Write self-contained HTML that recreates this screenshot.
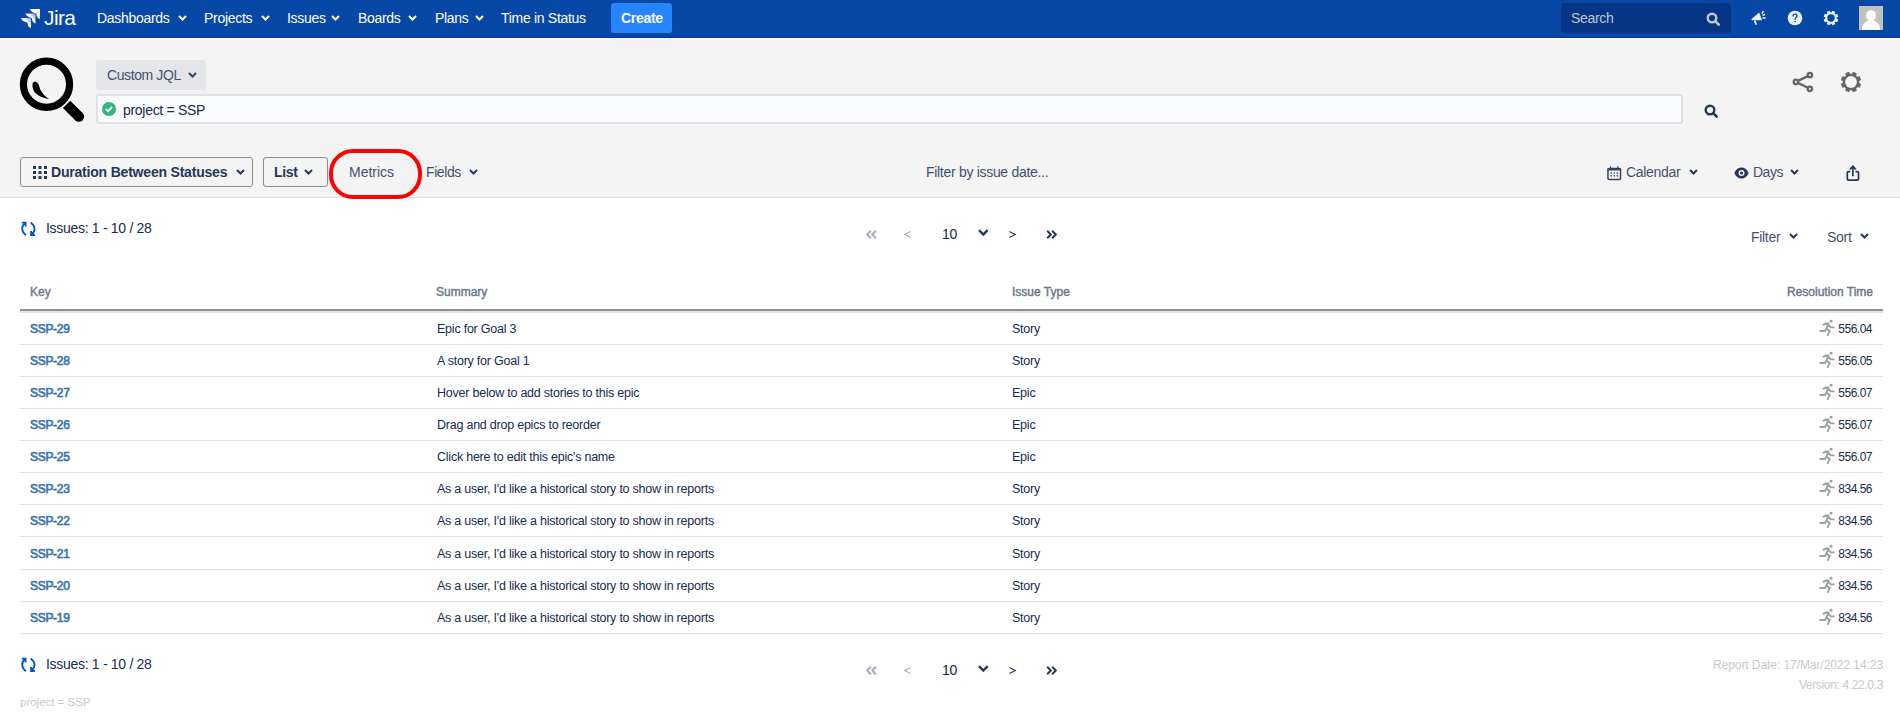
<!DOCTYPE html>
<html><head><meta charset="utf-8">
<style>
*{box-sizing:border-box;margin:0;padding:0}
html,body{width:1900px;height:724px;overflow:hidden;background:#fff;font-family:"Liberation Sans",sans-serif;color:#172b4d}
.a{position:absolute;white-space:nowrap;line-height:1}
svg{position:absolute;overflow:visible}
#hdr{position:absolute;left:0;top:0;width:1900px;height:38px;background:#0747a6;border-bottom:1px solid #0038a0}
#hl{position:absolute;left:0;top:38px;width:1900px;height:1px;background:#fff}
#top{position:absolute;left:0;top:39px;width:1900px;height:158px;background:#f4f4f4}
#tbl{position:absolute;left:0;top:197px;width:1900px;height:1px;background:#dfe1e6}
.nav{font-size:14px;letter-spacing:-0.3px;color:#fff}
.tb{font-size:14px;letter-spacing:-0.3px;color:#42526e}
.hline{position:absolute;left:20px;width:1863px;height:1px;background:#dfe1e6}
.th{font-size:12px;color:#6b778c;-webkit-text-stroke:0.4px #6b778c}
.key{font-size:12px;letter-spacing:-0.3px;color:#3572b0;-webkit-text-stroke:0.6px #3572b0}
.td{font-size:12.5px;letter-spacing:-0.23px;color:#172b4d}
.num{font-size:12px;letter-spacing:-0.5px;color:#172b4d}
</style></head><body>
<div id="hdr"></div><div id="hl"></div>
<div id="top"></div><div id="tbl"></div>

<!-- header -->
<svg style="left:20px;top:8px" width="22" height="22" viewBox="0 0 22 22">
 <defs><linearGradient id="jg" x1="0.2" y1="0.8" x2="1" y2="0.1"><stop offset="0" stop-color="#fff"/><stop offset="0.5" stop-color="#fff"/><stop offset="1" stop-color="#7f9ed9"/></linearGradient></defs>
 <path transform="translate(10 1)" d="M0 0 H9.9 V9.9 C8.6 9.5 7.2 8.8 6.8 7.2 C6.5 5.8 6.6 4.6 5.6 4.2 C4.5 3.8 2.8 3.6 1.8 2.7 C0.9 1.9 0.3 1 0 0 Z" fill="#fff"/>
 <path transform="translate(5.6 5.5)" d="M0 0 H9.9 V9.9 C8.6 9.5 7.2 8.8 6.8 7.2 C6.5 5.8 6.6 4.6 5.6 4.2 C4.5 3.8 2.8 3.6 1.8 2.7 C0.9 1.9 0.3 1 0 0 Z" fill="url(#jg)"/>
 <path transform="translate(1.1 10)" d="M0 0 H9.9 V9.9 C8.6 9.5 7.2 8.8 6.8 7.2 C6.5 5.8 6.6 4.6 5.6 4.2 C4.5 3.8 2.8 3.6 1.8 2.7 C0.9 1.9 0.3 1 0 0 Z" fill="url(#jg)"/>
</svg>
<div class="a nav" style="left:44px;top:7px;font-size:21px;letter-spacing:-0.6px">Jira</div>

<div class="a nav" style="left:97px;top:11px">Dashboards</div>
<div class="a nav" style="left:204px;top:11px">Projects</div>
<div class="a nav" style="left:287px;top:11px">Issues</div>
<div class="a nav" style="left:358px;top:11px">Boards</div>
<div class="a nav" style="left:435px;top:11px">Plans</div>
<div class="a nav" style="left:501px;top:11px">Time in Status</div>
<svg style="left:178px;top:15px" width="9" height="6"><path d="M1 1 L4.5 4.5 L8 1" stroke="#fff" stroke-width="2" fill="none"/></svg>
<svg style="left:261px;top:15px" width="9" height="6"><path d="M1 1 L4.5 4.5 L8 1" stroke="#fff" stroke-width="2" fill="none"/></svg>
<svg style="left:331px;top:15px" width="9" height="6"><path d="M1 1 L4.5 4.5 L8 1" stroke="#fff" stroke-width="2" fill="none"/></svg>
<svg style="left:408px;top:15px" width="9" height="6"><path d="M1 1 L4.5 4.5 L8 1" stroke="#fff" stroke-width="2" fill="none"/></svg>
<svg style="left:475px;top:15px" width="9" height="6"><path d="M1 1 L4.5 4.5 L8 1" stroke="#fff" stroke-width="2" fill="none"/></svg>

<div style="position:absolute;left:611px;top:3px;width:61px;height:30px;background:#2684ff;border-radius:3px"></div>
<div class="a nav" style="left:621px;top:11px;font-weight:bold">Create</div>

<div style="position:absolute;left:1561px;top:3px;width:170px;height:30px;background:#053584;border-radius:3px"></div>
<div class="a nav" style="left:1571px;top:11px;color:#c1c7d0">Search</div>
<svg style="left:1706px;top:12px" width="15" height="14" viewBox="0 0 15 14"><circle cx="6" cy="6" r="4.3" stroke="#c1c7d0" stroke-width="2.4" fill="none"/><path d="M9.3 9.3 L12.8 12.6" stroke="#c1c7d0" stroke-width="2.6" stroke-linecap="round"/></svg>

<!-- megaphone -->
<svg style="left:1751px;top:11px" width="16" height="15" viewBox="0 0 16 15">
 <path d="M0.9 7.9 L8 1.9 L10.7 8.9 L0.9 8.9 Z" fill="#e9f2ff" stroke="#e9f2ff" stroke-width="0.6" stroke-linejoin="round"/>
 <path d="M3.6 9.6 L5.3 13.6" stroke="#e9f2ff" stroke-width="1.7"/>
 <path d="M10.8 2.5 L12.5 0.3 M11.4 4.2 L14.1 3.6 M11.6 6.7 L14.7 7.2" stroke="#e9f2ff" stroke-width="1.5"/>
</svg>
<!-- help -->
<svg style="left:1787px;top:10px" width="16" height="16" viewBox="0 0 16 16">
 <circle cx="8" cy="8" r="7.3" fill="#e9f2ff"/>
 <path d="M6 6.1 C6 4.8 6.9 4.1 8 4.1 C9.2 4.1 10 4.9 10 5.9 C10 7.3 8.1 7.4 8.1 9.3" stroke="#0747a6" stroke-width="1.3" fill="none" stroke-linecap="round"/>
 <circle cx="8.1" cy="11.5" r="0.8" fill="#0747a6"/>
</svg>
<!-- gear -->
<svg style="left:1823px;top:10px" width="16" height="16" viewBox="0 0 16 16">
 <g fill="#e9f2ff" transform="rotate(22.5 8 8)">
  <circle cx="8" cy="8" r="5.7"/>
  <path d="M6.5 0.7 H9.5 L9.8 3 H6.2 Z"/>
  <path d="M6.5 0.7 H9.5 L9.8 3 H6.2 Z" transform="rotate(45 8 8)"/>
  <path d="M6.5 0.7 H9.5 L9.8 3 H6.2 Z" transform="rotate(90 8 8)"/>
  <path d="M6.5 0.7 H9.5 L9.8 3 H6.2 Z" transform="rotate(135 8 8)"/>
  <path d="M6.5 0.7 H9.5 L9.8 3 H6.2 Z" transform="rotate(180 8 8)"/>
  <path d="M6.5 0.7 H9.5 L9.8 3 H6.2 Z" transform="rotate(225 8 8)"/>
  <path d="M6.5 0.7 H9.5 L9.8 3 H6.2 Z" transform="rotate(270 8 8)"/>
  <path d="M6.5 0.7 H9.5 L9.8 3 H6.2 Z" transform="rotate(315 8 8)"/>
 </g>
 <circle cx="8" cy="8" r="3.7" fill="#0747a6"/>
</svg>
<!-- avatar -->
<div style="position:absolute;left:1859px;top:6px;width:24px;height:24px;background:#c1c1c1;overflow:hidden">
 <div style="position:absolute;left:7px;top:4px;width:10px;height:11px;border-radius:50%;background:#fff"></div>
 <div style="position:absolute;left:3px;top:14px;width:18px;height:18px;border-radius:9px 9px 0 0;background:#fff"></div>
</div>

<!-- JQL area -->
<svg style="left:19px;top:57px" width="66" height="66" viewBox="0 0 66 66">
 <circle cx="27.5" cy="27.3" r="23.1" stroke="#000" stroke-width="7.2" fill="none"/>
 <path d="M47.6 47.4 L59.9 59.6" stroke="#000" stroke-width="10.4"/>
 <circle cx="59.9" cy="59.6" r="5.2" fill="#000"/>
 <path d="M30.3 42.2 C25 41.5 19.5 39 15.8 35.5 C13.5 32.5 13.2 28.5 13.6 26.5 C14 24.4 17.5 24 19.1 26.5 C20 28 20.5 31 21.5 33 C23.5 37 27 40 30.3 42.2 Z" fill="#000"/>
</svg>

<div style="position:absolute;left:96px;top:60px;width:110px;height:30px;background:#e4e5e9;border-radius:3px"></div>
<div class="a tb" style="left:107px;top:68px;letter-spacing:-0.4px">Custom JQL</div>
<svg style="left:188px;top:72px" width="9" height="6"><path d="M1 1 L4.5 4.5 L8 1" stroke="#344563" stroke-width="2" fill="none"/></svg>

<div style="position:absolute;left:96px;top:94px;width:1587px;height:30px;background:#fafbfc;border:2px solid #dfe1e6;border-radius:3px"></div>
<svg style="left:102px;top:102px" width="14" height="14" viewBox="0 0 14 14"><circle cx="7" cy="7" r="7" fill="#36b37e"/><path d="M3.8 7.2 L6 9.2 L10.2 4.9" stroke="#fff" stroke-width="1.8" fill="none"/></svg>
<div class="a tb" style="left:123px;top:103px;color:#172b4d">project = SSP</div>
<svg style="left:1704px;top:104px" width="15" height="14" viewBox="0 0 15 14"><circle cx="6" cy="6" r="4.3" stroke="#253858" stroke-width="2.4" fill="none"/><path d="M9.3 9.3 L12.6 12.5" stroke="#253858" stroke-width="2.6" stroke-linecap="round"/></svg>

<!-- share -->
<svg style="left:1792px;top:71px" width="22" height="22" viewBox="0 0 22 22">
 <g stroke="#666" stroke-width="2.3" fill="none"><circle cx="3.9" cy="10.9" r="2.2"/><circle cx="17.9" cy="4.1" r="2.2"/><circle cx="17.9" cy="17.8" r="2.2"/><path d="M5.9 9.9 L15.9 5.1 M5.9 11.9 L15.9 16.8"/></g>
</svg>
<!-- gear grey -->
<svg style="left:1840px;top:71px" width="22" height="22" viewBox="0 0 22 22">
 <g fill="#666" transform="rotate(22.5 11 11)">
  <circle cx="11" cy="11" r="8.2"/>
  <path d="M9 0.8 H13 L13.4 4 H8.6 Z"/>
  <path d="M9 0.8 H13 L13.4 4 H8.6 Z" transform="rotate(45 11 11)"/>
  <path d="M9 0.8 H13 L13.4 4 H8.6 Z" transform="rotate(90 11 11)"/>
  <path d="M9 0.8 H13 L13.4 4 H8.6 Z" transform="rotate(135 11 11)"/>
  <path d="M9 0.8 H13 L13.4 4 H8.6 Z" transform="rotate(180 11 11)"/>
  <path d="M9 0.8 H13 L13.4 4 H8.6 Z" transform="rotate(225 11 11)"/>
  <path d="M9 0.8 H13 L13.4 4 H8.6 Z" transform="rotate(270 11 11)"/>
  <path d="M9 0.8 H13 L13.4 4 H8.6 Z" transform="rotate(315 11 11)"/>
 </g>
 <circle cx="11" cy="11" r="5.9" fill="#f4f4f4"/>
</svg>

<!-- toolbar -->
<div style="position:absolute;left:20px;top:157px;width:233px;height:30px;border:1px solid #8c8c8c;border-radius:3px"></div>
<svg style="left:33px;top:166px" width="14" height="14" viewBox="0 0 14 14"><g fill="#253858">
 <rect x="0" y="0" width="3" height="3"/><rect x="5.5" y="0" width="3" height="3"/><rect x="11" y="0" width="3" height="3"/>
 <rect x="0" y="5" width="3" height="3"/><rect x="5.5" y="5" width="3" height="3"/><rect x="11" y="5" width="3" height="3"/>
 <rect x="0" y="10" width="3" height="3"/><rect x="5.5" y="10" width="3" height="3"/><rect x="11" y="10" width="3" height="3"/></g></svg>
<div class="a tb" style="left:51px;top:165px;font-weight:bold;color:#253858;letter-spacing:-0.2px">Duration Between Statuses</div>
<svg style="left:236px;top:169px" width="9" height="6"><path d="M1 1 L4.5 4.5 L8 1" stroke="#253858" stroke-width="2" fill="none"/></svg>

<div style="position:absolute;left:263px;top:157px;width:65px;height:30px;border:1px solid #8c8c8c;border-radius:3px"></div>
<div class="a tb" style="left:274px;top:165px;font-weight:bold;color:#253858">List</div>
<svg style="left:304px;top:169px" width="9" height="6"><path d="M1 1 L4.5 4.5 L8 1" stroke="#253858" stroke-width="2" fill="none"/></svg>

<div class="a tb" style="left:349px;top:165px;letter-spacing:0">Metrics</div>
<div class="a tb" style="left:426px;top:165px;letter-spacing:-0.4px">Fields</div>
<svg style="left:469px;top:169px" width="9" height="6"><path d="M1 1 L4.5 4.5 L8 1" stroke="#253858" stroke-width="2" fill="none"/></svg>

<div class="a tb" style="left:926px;top:165px">Filter by issue date...</div>

<svg style="left:1607px;top:166px" width="15" height="15" viewBox="0 0 15 15">
 <rect x="0.95" y="2.45" width="12.6" height="11" rx="1.2" stroke="#344563" stroke-width="1.5" fill="none"/>
 <rect x="0.5" y="2" width="13.5" height="2.6" rx="1" fill="#344563"/>
 <path d="M3.6 0.2 V2.4 M10.8 0.2 V2.4" stroke="#344563" stroke-width="1.2"/>
 <g fill="#344563"><rect x="3.5" y="6.3" width="1.4" height="1.4"/><rect x="6.6" y="6.3" width="1.4" height="1.4"/><rect x="9.7" y="6.3" width="1.4" height="1.4"/><rect x="3.5" y="9.1" width="1.4" height="1.4"/><rect x="6.6" y="9.1" width="1.4" height="1.4"/><rect x="9.7" y="9.1" width="1.4" height="1.4"/></g>
</svg>
<div class="a tb" style="left:1626px;top:165px">Calendar</div>
<svg style="left:1689px;top:169px" width="9" height="6"><path d="M1 1 L4.5 4.5 L8 1" stroke="#253858" stroke-width="2" fill="none"/></svg>

<svg style="left:1734px;top:167px" width="15" height="12" viewBox="0 0 15 12">
 <path d="M0.3 6 C2 2 4.8 0.4 7.5 0.4 C10.2 0.4 13 2 14.7 6 C13 10 10.2 11.6 7.5 11.6 C4.8 11.6 2 10 0.3 6 Z" fill="#253858"/>
 <circle cx="7.5" cy="6" r="3" fill="#f4f4f4"/><circle cx="7.5" cy="6" r="1.6" fill="#253858"/>
</svg>
<div class="a tb" style="left:1753px;top:165px;letter-spacing:-0.5px">Days</div>
<svg style="left:1790px;top:169px" width="9" height="6"><path d="M1 1 L4.5 4.5 L8 1" stroke="#253858" stroke-width="2" fill="none"/></svg>

<svg style="left:1846px;top:165px" width="14" height="16" viewBox="0 0 14 16">
 <path d="M4.3 6.6 H2.6 C1.8 6.6 1.3 7.1 1.3 7.9 V13.9 C1.3 14.6 1.8 15.1 2.6 15.1 H11.2 C12 15.1 12.5 14.6 12.5 13.9 V7.9 C12.5 7.1 12 6.6 11.2 6.6 H9.5" stroke="#253858" stroke-width="1.7" fill="none"/>
 <path d="M6.9 11.2 V1.6 M3.9 4.5 L6.9 1.3 L9.9 4.5" stroke="#253858" stroke-width="1.7" fill="none"/>
</svg>

<!-- red highlight -->
<div style="position:absolute;left:329px;top:149px;width:93px;height:50px;border:4px solid #ff0000;border-radius:24px"></div>

<!-- list header -->
<svg style="left:15px;top:215px" width="30" height="30" viewBox="0 0 30 30"><g stroke="#0052cc" stroke-width="1.8" fill="none">
 <path d="M9.8 8.6 C7.8 10 7 12 7.2 14 C7.4 16.5 9 18.8 11 20.2"/><path d="M6.8 7.7 H10.6 V11.6"/>
 <path d="M16.9 19.1 C18.9 17.7 19.7 15.7 19.5 13.7 C19.3 11.2 17.7 8.9 15.7 7.5"/><path d="M19.9 20 H16.1 V16.1"/></g></svg>
<div class="a tb" style="left:46px;top:221px;color:#172b4d">Issues: 1 - 10 / 28</div>

<svg style="left:866px;top:230px" width="11" height="9" viewBox="0 0 11 9"><path d="M4.8 0.8 L1.2 4.5 L4.8 8.2 M9.8 0.8 L6.2 4.5 L9.8 8.2" stroke="#a5adba" stroke-width="2" fill="none"/></svg>
<svg style="left:904px;top:231px" width="7" height="7" viewBox="0 0 7 7"><path d="M6.6 0.6 L0.7 3.5 L6.6 6.4" stroke="#a5adba" stroke-width="1.1" fill="none"/></svg>
<div class="a tb" style="left:942px;top:227px;color:#172b4d">10</div>
<svg style="left:978px;top:229px" width="11" height="8"><path d="M1 1.2 L5.3 5.6 L9.6 1.2" stroke="#253858" stroke-width="2.4" fill="none"/></svg>
<svg style="left:1009px;top:231px" width="7" height="7" viewBox="0 0 7 7"><path d="M0.4 0.6 L6.3 3.5 L0.4 6.4" stroke="#253858" stroke-width="1.1" fill="none"/></svg>
<svg style="left:1046px;top:230px" width="11" height="9" viewBox="0 0 11 9"><path d="M1.2 0.8 L4.8 4.5 L1.2 8.2 M6.2 0.8 L9.8 4.5 L6.2 8.2" stroke="#253858" stroke-width="2" fill="none"/></svg>

<div class="a tb" style="left:1751px;top:230px">Filter</div>
<svg style="left:1789px;top:233px" width="9" height="6"><path d="M1 1 L4.5 4.5 L8 1" stroke="#253858" stroke-width="2" fill="none"/></svg>
<div class="a tb" style="left:1827px;top:230px">Sort</div>
<svg style="left:1860px;top:233px" width="9" height="6"><path d="M1 1 L4.5 4.5 L8 1" stroke="#253858" stroke-width="2" fill="none"/></svg>

<!-- table -->
<div class="a th" style="left:30px;top:286px">Key</div>
<div class="a th" style="left:436px;top:286px">Summary</div>
<div class="a th" style="left:1012px;top:286px">Issue Type</div>
<div class="a th" style="right:27px;top:286px">Resolution Time</div>
<div style="position:absolute;left:20px;top:309px;width:1863px;height:2px;background:#8f8f8f"></div>
<div style="position:absolute;left:20px;top:311px;width:1863px;height:2px;background:#e4e5e9"></div>

<div id="rows"><div class="a key" style="left:30px;top:323px">SSP-29</div>
<div class="a td" style="left:437px;top:323px">Epic for Goal 3</div>
<div class="a td" style="left:1012px;top:323px">Story</div>
<svg style="left:1815px;top:316px" width="25" height="24" viewBox="0 0 25 24"><circle cx="16.1" cy="5.3" r="1.45" fill="#9e9e9e"/><path d="M8.4 8.7 C10 7.7 12 7.2 13.7 7.6 C13 9.6 12.2 11 11.4 12.4 L14.8 15 L12.7 19.2 M11.4 12.4 L10 15 H5.2 M14.3 9.6 L15.8 11.3 L18.8 11.4" stroke="#9e9e9e" stroke-width="1.9" fill="none" stroke-linecap="round" stroke-linejoin="round"/></svg>
<div class="a num" style="right:28px;top:323px">556.04</div>
<div class="hline" style="top:344px"></div>
<div class="a key" style="left:30px;top:355px">SSP-28</div>
<div class="a td" style="left:437px;top:355px">A story for Goal 1</div>
<div class="a td" style="left:1012px;top:355px">Story</div>
<svg style="left:1815px;top:348px" width="25" height="24" viewBox="0 0 25 24"><circle cx="16.1" cy="5.3" r="1.45" fill="#9e9e9e"/><path d="M8.4 8.7 C10 7.7 12 7.2 13.7 7.6 C13 9.6 12.2 11 11.4 12.4 L14.8 15 L12.7 19.2 M11.4 12.4 L10 15 H5.2 M14.3 9.6 L15.8 11.3 L18.8 11.4" stroke="#9e9e9e" stroke-width="1.9" fill="none" stroke-linecap="round" stroke-linejoin="round"/></svg>
<div class="a num" style="right:28px;top:355px">556.05</div>
<div class="hline" style="top:376px"></div>
<div class="a key" style="left:30px;top:387px">SSP-27</div>
<div class="a td" style="left:437px;top:387px">Hover below to add stories to this epic</div>
<div class="a td" style="left:1012px;top:387px">Epic</div>
<svg style="left:1815px;top:380px" width="25" height="24" viewBox="0 0 25 24"><circle cx="16.1" cy="5.3" r="1.45" fill="#9e9e9e"/><path d="M8.4 8.7 C10 7.7 12 7.2 13.7 7.6 C13 9.6 12.2 11 11.4 12.4 L14.8 15 L12.7 19.2 M11.4 12.4 L10 15 H5.2 M14.3 9.6 L15.8 11.3 L18.8 11.4" stroke="#9e9e9e" stroke-width="1.9" fill="none" stroke-linecap="round" stroke-linejoin="round"/></svg>
<div class="a num" style="right:28px;top:387px">556.07</div>
<div class="hline" style="top:408px"></div>
<div class="a key" style="left:30px;top:419px">SSP-26</div>
<div class="a td" style="left:437px;top:419px">Drag and drop epics to reorder</div>
<div class="a td" style="left:1012px;top:419px">Epic</div>
<svg style="left:1815px;top:412px" width="25" height="24" viewBox="0 0 25 24"><circle cx="16.1" cy="5.3" r="1.45" fill="#9e9e9e"/><path d="M8.4 8.7 C10 7.7 12 7.2 13.7 7.6 C13 9.6 12.2 11 11.4 12.4 L14.8 15 L12.7 19.2 M11.4 12.4 L10 15 H5.2 M14.3 9.6 L15.8 11.3 L18.8 11.4" stroke="#9e9e9e" stroke-width="1.9" fill="none" stroke-linecap="round" stroke-linejoin="round"/></svg>
<div class="a num" style="right:28px;top:419px">556.07</div>
<div class="hline" style="top:440px"></div>
<div class="a key" style="left:30px;top:451px">SSP-25</div>
<div class="a td" style="left:437px;top:451px">Click here to edit this epic's name</div>
<div class="a td" style="left:1012px;top:451px">Epic</div>
<svg style="left:1815px;top:444px" width="25" height="24" viewBox="0 0 25 24"><circle cx="16.1" cy="5.3" r="1.45" fill="#9e9e9e"/><path d="M8.4 8.7 C10 7.7 12 7.2 13.7 7.6 C13 9.6 12.2 11 11.4 12.4 L14.8 15 L12.7 19.2 M11.4 12.4 L10 15 H5.2 M14.3 9.6 L15.8 11.3 L18.8 11.4" stroke="#9e9e9e" stroke-width="1.9" fill="none" stroke-linecap="round" stroke-linejoin="round"/></svg>
<div class="a num" style="right:28px;top:451px">556.07</div>
<div class="hline" style="top:472px"></div>
<div class="a key" style="left:30px;top:483px">SSP-23</div>
<div class="a td" style="left:437px;top:483px">As a user, I'd like a historical story to show in reports</div>
<div class="a td" style="left:1012px;top:483px">Story</div>
<svg style="left:1815px;top:476px" width="25" height="24" viewBox="0 0 25 24"><circle cx="16.1" cy="5.3" r="1.45" fill="#9e9e9e"/><path d="M8.4 8.7 C10 7.7 12 7.2 13.7 7.6 C13 9.6 12.2 11 11.4 12.4 L14.8 15 L12.7 19.2 M11.4 12.4 L10 15 H5.2 M14.3 9.6 L15.8 11.3 L18.8 11.4" stroke="#9e9e9e" stroke-width="1.9" fill="none" stroke-linecap="round" stroke-linejoin="round"/></svg>
<div class="a num" style="right:28px;top:483px">834.56</div>
<div class="hline" style="top:504px"></div>
<div class="a key" style="left:30px;top:515px">SSP-22</div>
<div class="a td" style="left:437px;top:515px">As a user, I'd like a historical story to show in reports</div>
<div class="a td" style="left:1012px;top:515px">Story</div>
<svg style="left:1815px;top:508px" width="25" height="24" viewBox="0 0 25 24"><circle cx="16.1" cy="5.3" r="1.45" fill="#9e9e9e"/><path d="M8.4 8.7 C10 7.7 12 7.2 13.7 7.6 C13 9.6 12.2 11 11.4 12.4 L14.8 15 L12.7 19.2 M11.4 12.4 L10 15 H5.2 M14.3 9.6 L15.8 11.3 L18.8 11.4" stroke="#9e9e9e" stroke-width="1.9" fill="none" stroke-linecap="round" stroke-linejoin="round"/></svg>
<div class="a num" style="right:28px;top:515px">834.56</div>
<div class="hline" style="top:536px"></div>
<div class="a key" style="left:30px;top:548px">SSP-21</div>
<div class="a td" style="left:437px;top:548px">As a user, I'd like a historical story to show in reports</div>
<div class="a td" style="left:1012px;top:548px">Story</div>
<svg style="left:1815px;top:541px" width="25" height="24" viewBox="0 0 25 24"><circle cx="16.1" cy="5.3" r="1.45" fill="#9e9e9e"/><path d="M8.4 8.7 C10 7.7 12 7.2 13.7 7.6 C13 9.6 12.2 11 11.4 12.4 L14.8 15 L12.7 19.2 M11.4 12.4 L10 15 H5.2 M14.3 9.6 L15.8 11.3 L18.8 11.4" stroke="#9e9e9e" stroke-width="1.9" fill="none" stroke-linecap="round" stroke-linejoin="round"/></svg>
<div class="a num" style="right:28px;top:548px">834.56</div>
<div class="hline" style="top:569px"></div>
<div class="a key" style="left:30px;top:580px">SSP-20</div>
<div class="a td" style="left:437px;top:580px">As a user, I'd like a historical story to show in reports</div>
<div class="a td" style="left:1012px;top:580px">Story</div>
<svg style="left:1815px;top:573px" width="25" height="24" viewBox="0 0 25 24"><circle cx="16.1" cy="5.3" r="1.45" fill="#9e9e9e"/><path d="M8.4 8.7 C10 7.7 12 7.2 13.7 7.6 C13 9.6 12.2 11 11.4 12.4 L14.8 15 L12.7 19.2 M11.4 12.4 L10 15 H5.2 M14.3 9.6 L15.8 11.3 L18.8 11.4" stroke="#9e9e9e" stroke-width="1.9" fill="none" stroke-linecap="round" stroke-linejoin="round"/></svg>
<div class="a num" style="right:28px;top:580px">834.56</div>
<div class="hline" style="top:601px"></div>
<div class="a key" style="left:30px;top:612px">SSP-19</div>
<div class="a td" style="left:437px;top:612px">As a user, I'd like a historical story to show in reports</div>
<div class="a td" style="left:1012px;top:612px">Story</div>
<svg style="left:1815px;top:605px" width="25" height="24" viewBox="0 0 25 24"><circle cx="16.1" cy="5.3" r="1.45" fill="#9e9e9e"/><path d="M8.4 8.7 C10 7.7 12 7.2 13.7 7.6 C13 9.6 12.2 11 11.4 12.4 L14.8 15 L12.7 19.2 M11.4 12.4 L10 15 H5.2 M14.3 9.6 L15.8 11.3 L18.8 11.4" stroke="#9e9e9e" stroke-width="1.9" fill="none" stroke-linecap="round" stroke-linejoin="round"/></svg>
<div class="a num" style="right:28px;top:612px">834.56</div>
<div class="hline" style="top:633px"></div></div><!--/rows-->

<!-- footer -->
<svg style="left:15px;top:651px" width="30" height="30" viewBox="0 0 30 30"><g stroke="#0052cc" stroke-width="1.8" fill="none">
 <path d="M9.8 8.6 C7.8 10 7 12 7.2 14 C7.4 16.5 9 18.8 11 20.2"/><path d="M6.8 7.7 H10.6 V11.6"/>
 <path d="M16.9 19.1 C18.9 17.7 19.7 15.7 19.5 13.7 C19.3 11.2 17.7 8.9 15.7 7.5"/><path d="M19.9 20 H16.1 V16.1"/></g></svg>
<div class="a tb" style="left:46px;top:657px;color:#172b4d">Issues: 1 - 10 / 28</div>
<svg style="left:866px;top:666px" width="11" height="9" viewBox="0 0 11 9"><path d="M4.8 0.8 L1.2 4.5 L4.8 8.2 M9.8 0.8 L6.2 4.5 L9.8 8.2" stroke="#a5adba" stroke-width="2" fill="none"/></svg>
<svg style="left:904px;top:667px" width="7" height="7" viewBox="0 0 7 7"><path d="M6.6 0.6 L0.7 3.5 L6.6 6.4" stroke="#a5adba" stroke-width="1.1" fill="none"/></svg>
<div class="a tb" style="left:942px;top:663px;color:#172b4d">10</div>
<svg style="left:978px;top:665px" width="11" height="8"><path d="M1 1.2 L5.3 5.6 L9.6 1.2" stroke="#253858" stroke-width="2.4" fill="none"/></svg>
<svg style="left:1009px;top:667px" width="7" height="7" viewBox="0 0 7 7"><path d="M0.4 0.6 L6.3 3.5 L0.4 6.4" stroke="#253858" stroke-width="1.1" fill="none"/></svg>
<svg style="left:1046px;top:666px" width="11" height="9" viewBox="0 0 11 9"><path d="M1.2 0.8 L4.8 4.5 L1.2 8.2 M6.2 0.8 L9.8 4.5 L6.2 8.2" stroke="#253858" stroke-width="2" fill="none"/></svg>

<div class="a" style="left:20px;top:697px;font-size:11.5px;color:#c6c9ce">project = SSP</div>
<div class="a" style="right:17px;top:659px;font-size:12px;letter-spacing:-0.07px;color:#c6c9ce">Report Date: 17/Mar/2022 14:23</div>
<div class="a" style="right:17px;top:679px;font-size:12px;letter-spacing:-0.35px;color:#c6c9ce">Version: 4.22.0.3</div>
</body></html>
